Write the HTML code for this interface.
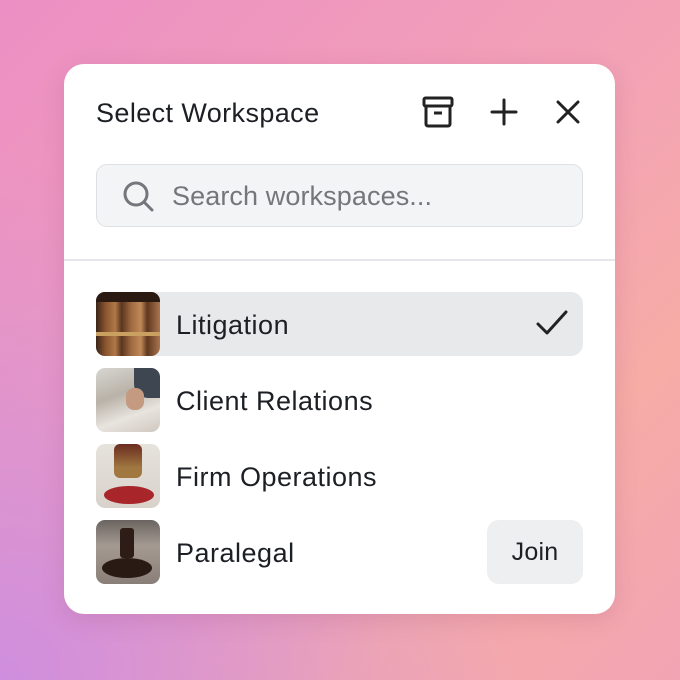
<!DOCTYPE html>
<html><head><meta charset="utf-8"><style>
*{margin:0;padding:0;box-sizing:border-box}
body{width:680px;height:680px;overflow:hidden;font-family:"Liberation Sans",sans-serif;color:#1c1f24;
background:radial-gradient(circle at 0% 100%,#cf8ede 0%,rgba(207,142,222,0) 55%),linear-gradient(135deg,#ec8fc4 0%,#f3a2b6 50%,#f7aca6 75%,#f2a4b4 100%);position:relative}
.card{position:absolute;left:64px;top:64px;width:551px;height:550px;background:#fff;border-radius:20px;box-shadow:0 6px 24px rgba(120,40,90,.15)}
.title{position:absolute;left:32px;top:34px;font-size:27px;letter-spacing:.4px}
.ic{position:absolute;top:30px}
.search{position:absolute;left:32px;top:100px;width:487px;height:63px;background:#f3f4f6;border:1.5px solid #dfe0e3;border-radius:11px}
.search span{position:absolute;left:75px;top:16px;font-size:27px;letter-spacing:.1px;color:#74767b}
.div{position:absolute;left:0;right:0;top:195px;height:1.5px;background:#e6e7ea}
.row{position:absolute;left:32px;width:487px;height:64px;border-radius:12px}
.row.sel{background:#e8e9eb}
.th{position:absolute;left:0;top:0;width:64px;height:64px;border-radius:9px;overflow:hidden}
.row .t{position:absolute;left:80px;top:18px;font-size:27px;letter-spacing:.5px}
.join{position:absolute;right:0;top:0;width:96px;height:64px;background:#eeeff1;border-radius:12px;font-size:25px;letter-spacing:.2px;text-align:center;line-height:64px}
</style></head><body>
<div class="card">
<div class="title">Select Workspace</div>
<svg class="ic" style="left:356px" width="36" height="36" viewBox="0 0 36 36" fill="none" stroke="#222" stroke-width="3" stroke-linejoin="round"><rect x="4" y="4" width="28" height="8" rx="1.5"/><path d="M6 12v18a2 2 0 0 0 2 2h20a2 2 0 0 0 2-2V12"/><path d="M14 19h8"/></svg>
<svg class="ic" style="left:422px" width="36" height="36" viewBox="0 0 36 36" stroke="#222" stroke-width="3" stroke-linecap="round"><path d="M18 6v24M6 18h24"/></svg>
<svg class="ic" style="left:486px" width="36" height="36" viewBox="0 0 36 36" stroke="#222" stroke-width="3" stroke-linecap="round"><path d="M8 8l20 20M28 8L8 28"/></svg>
<div class="search"><svg style="position:absolute;left:25px;top:15px" width="34" height="34" viewBox="0 0 34 34" fill="none" stroke="#74767b" stroke-width="3" stroke-linecap="round"><circle cx="14" cy="14" r="11"/><path d="M22 22l8 8"/></svg><span>Search workspaces...</span></div>
<div class="div"></div>
<div class="row sel" style="top:228px"><div class="th" style="background:linear-gradient(90deg,#3a2418 0%,#8a5530 15%,#b07848 30%,#5a3520 40%,#a06a40 55%,#c08858 70%,#60381f 80%,#a87550 100%)"><div style="position:absolute;left:0;right:0;top:0;height:10px;background:#2a1a12"></div><div style="position:absolute;left:0;right:0;top:40px;height:4px;background:#c9a060"></div></div><div class="t">Litigation</div>
<svg style="position:absolute;right:14px;top:16px" width="34" height="30" viewBox="0 0 34 30" fill="none" stroke="#222" stroke-width="3" stroke-linecap="round" stroke-linejoin="round"><path d="M3 16l9 9L31 4"/></svg></div>
<div class="row" style="top:304px"><div class="th" style="background:linear-gradient(160deg,#d8d6d2 0%,#b9b2a8 40%,#e8e4de 70%,#cfc8bf 100%)"><div style="position:absolute;right:0;top:0;width:26px;height:30px;background:#3e4652;border-bottom-left-radius:14px"></div><div style="position:absolute;left:30px;top:20px;width:18px;height:22px;background:#c49a80;border-radius:8px"></div></div><div class="t">Client Relations</div></div>
<div class="row" style="top:380px"><div class="th" style="background:linear-gradient(180deg,#e6e2dc 0%,#d8d2ca 100%)"><div style="position:absolute;left:18px;top:0;width:28px;height:34px;background:linear-gradient(180deg,#6a2c20,#a07840 70%);border-radius:6px"></div><div style="position:absolute;left:8px;top:42px;width:50px;height:18px;background:#a8262a;border-radius:50%"></div></div><div class="t">Firm Operations</div></div>
<div class="row" style="top:456px"><div class="th" style="background:linear-gradient(180deg,#6a6460 0%,#a49a92 40%,#8a7f78 100%)"><div style="position:absolute;left:24px;top:8px;width:14px;height:30px;background:#2d1d16;border-radius:3px"></div><div style="position:absolute;left:6px;top:38px;width:50px;height:20px;background:#2a1a14;border-radius:50%"></div></div><div class="t">Paralegal</div><div class="join">Join</div></div>
</div>
</body></html>
